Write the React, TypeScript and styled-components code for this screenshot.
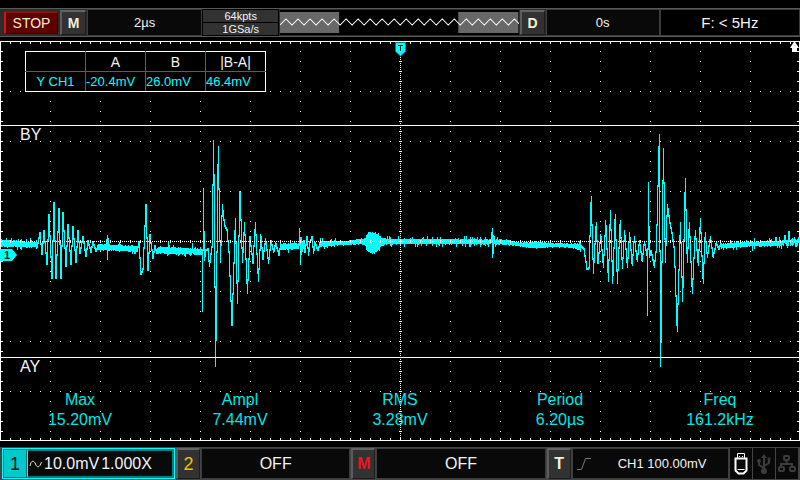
import React from 'react';
import styled, { createGlobalStyle } from 'styled-components';

const GlobalStyle = createGlobalStyle`
  * { box-sizing: border-box; }
  body { margin: 0; background: #000; }
  button { font-family: inherit; padding: 0; margin: 0; cursor: pointer; }
`;

const CYAN = '#00ffff';

const Screen = styled.main`
  display: flex;
  flex-direction: column;
  gap: 4px;
  padding-top: 8px;
  background: #000;
  color: #f4f4f4;
  font-family: "Liberation Sans", Arial, sans-serif;
  font-size: 13px;
  line-height: 16px;
`;

const TopBar = styled.header`
  display: grid;
  grid-template-columns: 60px 27px 115fr 77fr 240fr 26px 114fr 140fr;
  height: 29px;
  border-top: 1px solid #5a5a5a;
  border-bottom: 1px solid #5a5a5a;
  background: #2c2c2c;
`;

const StopButton = styled.button`
  margin: 2px 2px 2px 4px;
  border: 1px solid #3c0000;
  border-top: 2px solid #901010;
  border-left: 2px solid #d01414;
  background: #5e0000;
  color: #f6efd4;
  font-size: 14px;
  line-height: 16px;
`;

const KeyButton = styled.button<{ $color?: string; $size?: number; $bold?: boolean }>`
  border: 1px solid #1c1c1c;
  border-top: 2px solid #646464;
  border-left: 2px solid #5c5c5c;
  background: #323232;
  color: ${(p) => p.$color ?? '#f4f0d8'};
  font-size: ${(p) => p.$size ?? 14}px;
  font-weight: ${(p) => (p.$bold === false ? 400 : 700)};
  line-height: 18px;
`;

const TopKey = styled(KeyButton)`
  margin: 1px 1px 1px 0;
`;

const Panel = styled.div<{ $size?: number; $bg?: string }>`
  display: flex;
  align-items: center;
  justify-content: center;
  min-width: 0;
  border: 1px solid #3c3c3c;
  background: ${(p) => p.$bg ?? '#090909'};
  font-size: ${(p) => p.$size ?? 13}px;
  white-space: nowrap;
`;

const StatusPanel = styled(Panel)`
  border: 0;
`;

const SampleStack = styled.div`
  display: grid;
  grid-template-rows: 1fr 1fr;
  gap: 1px;
  padding: 1px;
  background: #000;
  font-size: 11px;
  line-height: 12px;
  text-align: center;
`;

const SampleCell = styled.div`
  background: #323232;
`;

const MemoryView = styled.div`
  border: 1px solid #2c2c2c;
  background: #000;
  svg { display: block; width: 100%; height: 25px; }
`;

const Plot = styled.section`
  position: relative;
`;

const PlotSvg = styled.svg`
  display: block;
  width: 100%;
  height: auto;
`;

const CursorTable = styled.table`
  position: absolute;
  top: 10px;
  left: 25px;
  border-collapse: collapse;
  table-layout: fixed;
  width: 241px;
  background: #000;
  border: 1px solid #fff;
  th, td {
    height: 20px;
    padding: 0;
    border: 1px solid #5c5c5c;
    font-weight: 400;
    line-height: 18px;
    white-space: nowrap;
  }
  thead th, thead td { border-top-color: #fff; font-size: 14px; }
  tbody th, tbody td { border-bottom-color: #fff; color: ${CYAN}; }
  tr > :first-child { border-left-color: #fff; }
  tr > :last-child { border-right-color: #fff; }
  th { text-align: center; }
`;

const CursorLabel = styled.span<{ $top: string }>`
  position: absolute;
  left: 20px;
  top: ${(p) => p.$top};
  font-size: 16px;
  line-height: 20px;
`;

const Measurements = styled.dl`
  position: absolute;
  left: 0;
  right: 0;
  bottom: 11px;
  display: grid;
  grid-template-columns: repeat(5, 1fr);
  margin: 0;
  color: #00e6e6;
  font-size: 16px;
  line-height: 20px;
  text-align: center;
  dd { margin: 0; }
`;

const BottomBar = styled.footer`
  display: grid;
  grid-template-columns: 173px 24px 149fr 24px 169fr 24px 157fr 22px 22px 22px;
  gap: 1px;
  height: 33px;
  margin-top: 2px;
  padding: 1px 2px;
  background: #444;
`;

const ChannelOne = styled.div`
  display: grid;
  grid-template-columns: 24px 1fr;
  border: 1px solid ${CYAN};
  background: #006c6c;
`;

const ChannelKey = styled.button`
  margin: 1px;
  border: 0;
  background: #00c8cc;
  color: #001414;
  font-size: 18px;
  line-height: 20px;
`;

const ChannelInfo = styled.div`
  display: flex;
  align-items: center;
  gap: 2px;
  padding-left: 1px;
  background: #0a0a0a;
  border: 2px solid #007c7c;
  border-left: 1px solid ${CYAN};
  font-size: 16px;
  white-space: nowrap;
`;

const TriggerInfo = styled(Panel)`
  justify-content: flex-start;
  gap: 27px;
  padding-left: 4px;
`;

/* Vertices of the burst sections, as [x, y] extremes of the oscillation. */
type Point = [number, number];
const bursts: Point[][] = [
  [[38, 243], [40, 233], [42, 254], [44, 231], [47, 264], [49, 215], [52, 278], [54, 203], [56, 278], [59, 209], [61, 278], [63, 213], [66, 266], [68, 225], [71, 264], [73, 227], [76, 262], [78, 231], [80, 253], [83, 237], [86, 256], [88, 241], [91, 252], [93, 242], [96, 251], [98, 246]],
  [[138, 247], [139, 242], [141, 274], [143, 269], [146, 205], [148, 270], [150, 235], [153, 258], [155, 246], [157, 253], [158, 249]],
  [[202, 250], [202.6, 311], [203.4, 189], [204.4, 260], [206, 250], [208, 249], [209.4, 266], [212, 247], [213.7, 141], [215.7, 366], [218.2, 147], [220.4, 262], [222.4, 205], [224.5, 225], [227, 230], [229, 252], [232, 325], [235.4, 219], [237.5, 303], [240, 192], [242.5, 262], [244.5, 223], [247.4, 293], [250, 237], [253, 263], [255.4, 223], [258.4, 281], [260.8, 235], [263, 259], [265.6, 239], [268.6, 263], [271, 241], [273.7, 252], [275.7, 243], [279, 255], [281, 242]],
  [[299, 245], [299.8, 229], [300.6, 264], [301.6, 238], [302.6, 251], [304, 241], [305, 252], [307, 237], [308.6, 255], [310, 242], [312, 237], [313.6, 253], [315, 243], [318, 250], [320, 243]],
  [[491, 242], [492.4, 229], [492.8, 257], [493.8, 236], [495, 243]],
  [[581, 246], [584, 249], [587, 269], [589, 268], [591.2, 197], [593.4, 273], [596.2, 223], [598, 263], [600.8, 235], [603.4, 267], [605.8, 221], [608.4, 281], [610.4, 211], [612.7, 283], [615.2, 215], [617.4, 283], [620.2, 221], [622.4, 268], [624.6, 231], [627.4, 267], [629.6, 233], [632.2, 265], [634.4, 237], [637.2, 261], [639.4, 241], [642.2, 261], [644.4, 242], [647.1, 256], [647.6, 315], [648.4, 183], [649.4, 257], [651, 251], [652.4, 257], [654.4, 267], [656.4, 248], [659.3, 135], [660.7, 366], [663.4, 149], [665.4, 262], [667.4, 205], [670, 223], [671.7, 231], [674.4, 250], [677.2, 331], [680.4, 223], [682.7, 301], [685.3, 179], [687.2, 262], [689.4, 223], [692.3, 293], [695.3, 231], [698.3, 265], [700.4, 219], [703.2, 283], [705.2, 233], [707.4, 257], [710.4, 237], [713.2, 257], [716.2, 243], [719, 249], [721, 243]],
];

/* Noise band between bursts: [x, centre, half height]. */
const band: [number, number, number][] = [
  [0, 243, 3], [20, 244, 2.5], [38, 245, 2], [98, 247, 2.5], [138, 249, 2.5], [158, 250, 3], [202, 252, 2.5],
  [281, 247, 2.5], [299, 246, 2.5], [320, 244, 2.5], [345, 243, 1.5], [362, 241.5, 2.5], [365, 242, 4], [367, 242, 8], [370, 243, 9],
  [375, 243, 9], [378, 242, 7], [381, 242, 4], [386, 241.5, 2], [440, 241.5, 2], [480, 242, 2], [505, 242, 2], [520, 244.5, 1.5],
  [530, 245, 2.5], [542, 245, 2.5], [550, 245, 1.5], [570, 245.5, 1.5], [581, 247, 3], [721, 246, 2], [743, 244.5, 2], [775, 243.5, 2], [800, 242, 3],
];

/* Short excursions on top of the noise: column -> [top, bottom]. */
const ticks: Record<number, Point> = {
  26: [239, 248], 36: [240, 249], 106: [239, 250], 107: [235, 260], 108: [238, 251], 120: [244, 251], 168: [241, 255], 169: [245, 254],
  192: [243, 253], 331: [239, 247], 390: [237, 246], 412: [237, 244], 432: [237, 246], 440: [237, 244], 472: [237, 244],
  480: [237, 247], 485: [237, 246], 497: [237, 244], 535: [241, 248], 536: [241, 249], 580: [241, 252],
  752: [242, 251], 775: [237, 246], 776: [237, 246], 779: [237, 248], 784: [235, 243], 785: [235, 244], 787: [240, 248], 788: [231, 246],
  789: [231, 242], 794: [237, 243], 796: [240, 247], 798: [237, 243], 799: [235, 242],
};

const noise = (n: number) => {
  const v = Math.sin(n * 12.9898) * 43758.5453;
  return v - Math.floor(v);
};

function valueAt(points: number[][], x: number, k: number) {
  for (let i = 1; i < points.length; i += 1) {
    const a = points[i - 1];
    const b = points[i];
    if (x <= b[0]) return a[k] + ((b[k] - a[k]) * (x - a[0])) / (b[0] - a[0]);
  }
  return points[points.length - 1][k];
}

function column(x: number): Point {
  if (ticks[x]) return ticks[x];
  const burst = bursts.find((b) => x >= b[0][0] && x < b[b.length - 1][0]);
  if (burst) {
    const inside = burst.filter((p) => p[0] >= x && p[0] <= x + 1).map((p) => p[1]);
    const ys = [valueAt(burst, x, 1), valueAt(burst, x + 1, 1), ...inside];
    return [Math.min(...ys) - 1, Math.max(...ys) + 1];
  }
  const c = valueAt(band, x, 1);
  const h = valueAt(band, x, 2);
  const quiet = (x > 335 && x < 362) || (x > 500 && x < 575);
  const extra = (key: number) => {
    if (h > 6) return 2;
    return noise(key) > 0.8 && !quiet ? 4 : 1;
  };
  return [c - h - noise(x) * extra(x * 5), c + h + noise(x + 900) * extra(x * 7 + 3)];
}

const tracePath = Array.from({ length: 800 }, (_, x) => {
  const [top, bottom] = column(x).map(Math.round);
  return `M${x} ${top}h1V${bottom}h-1z`;
}).join('');

const rect = (x: number, y: number, w = 1, h = 1) => `M${x} ${y}h${w}v${h}h${-w}z`;

function graticule() {
  let d = rect(0, 41, 800, 1) + rect(0, 440, 800, 1) + rect(0, 41, 1, 400) + rect(799, 41, 1, 400);
  for (let x = 10; x < 800; x += 10) {
    d += rect(x, 42, 1, 2) + rect(x, 438, 1, 2) + rect(x, 240, 1, 3);
    for (let y = 91; y < 440; y += 50) if (y !== 241) d += rect(x, y);
  }
  for (let y = 51; y < 440; y += 10) {
    d += rect(1, y, 2, 1) + rect(797, y, 2, 1) + rect(399, y, 3, 1);
    for (let x = 50; x < 800; x += 50) d += rect(x, y);
  }
  for (let x = 2; x < 800; x += 2) d += rect(x, 241);
  for (let y = 43; y < 440; y += 2) d += rect(400, y);
  return d;
}

const gridPath = graticule();

const zigzag = Array.from({ length: 41 }, (_, i) => `${i * 6},${i % 2 ? 9 : 15}`).join(' ');

const measurements = [
  ['Max', '15.20mV'],
  ['Ampl', '7.44mV'],
  ['RMS', '3.28mV'],
  ['Period', '6.20µs'],
  ['Freq', '161.2kHz'],
];

function Waveform() {
  return (
    <PlotSvg viewBox="0 41 800 400" role="img" aria-label="Channel 1 waveform">
      <g shapeRendering="crispEdges">
        <path d={tracePath} fill={CYAN} />
        <path d={gridPath} fill="#fff" />
        <path d={rect(0, 125, 800, 1) + rect(0, 357, 800, 1)} fill="#fff" />
      </g>
      <path d="M395.5 42.5h10v9l-5 4.5l-5-4.5z" fill={CYAN} stroke="#007c80" />
      <path d="M398 45h5v1h-2v5h-1v-5h-2z" fill="#002020" shapeRendering="crispEdges" />
      <path d="M794.5 41l4.5 7h-2v4h-5v-4h-2z" fill="#fff" />
      <path d="M0 249h12l5 6-5 6H0z" fill={CYAN} />
      <text x="4" y="259" fontSize="11" fontWeight="700" fill="#002020">1</text>
    </PlotSvg>
  );
}

export default function App() {
  return (
    <>
      <GlobalStyle />
      <Screen>
        <TopBar>
          <StopButton type="button">STOP</StopButton>
          <TopKey type="button">M</TopKey>
          <Panel>2µs</Panel>
          <SampleStack>
            <SampleCell>64kpts</SampleCell>
            <SampleCell>1GSa/s</SampleCell>
          </SampleStack>
          <MemoryView>
            <svg viewBox="0 0 238 25" preserveAspectRatio="none" aria-hidden="true">
              <path d="M0 2h59v21H0zM178 2h60v21h-60z" fill="#686868" />
              <polyline points={zigzag} fill="none" stroke="#fff" />
            </svg>
          </MemoryView>
          <TopKey type="button">D</TopKey>
          <Panel>0s</Panel>
          <Panel $size={15} $bg="#000">F: &lt; 5Hz</Panel>
        </TopBar>

        <Plot>
          <Waveform />
          <CursorTable>
            <thead>
              <tr>
                <td />
                <th scope="col">A</th>
                <th scope="col">B</th>
                <th scope="col">|B-A|</th>
              </tr>
            </thead>
            <tbody>
              <tr>
                <th scope="row">Y CH1</th>
                <td>-20.4mV</td>
                <td>26.0mV</td>
                <td>46.4mV</td>
              </tr>
            </tbody>
          </CursorTable>
          <CursorLabel $top="21%">BY</CursorLabel>
          <CursorLabel $top="79%">AY</CursorLabel>
          <Measurements>
            {measurements.map(([name, value]) => (
              <div key={name}>
                <dt>{name}</dt>
                <dd>{value}</dd>
              </div>
            ))}
          </Measurements>
        </Plot>

        <BottomBar>
          <ChannelOne>
            <ChannelKey type="button">1</ChannelKey>
            <ChannelInfo>
              <svg width="13" height="8" viewBox="0 0 13 8" aria-hidden="true">
                <path d="M1 6C2 0 5 0 6.500 4s4 4 6-2" fill="none" stroke="#e8e4b8" />
              </svg>
              <span>10.0mV</span>
              <span>1.000X</span>
            </ChannelInfo>
          </ChannelOne>
          <KeyButton type="button" $color="#f0c010" $size={18} $bold={false}>2</KeyButton>
          <Panel $size={16}>OFF</Panel>
          <KeyButton type="button" $color="#e81820" $size={16}>M</KeyButton>
          <Panel $size={16}>OFF</Panel>
          <KeyButton type="button" $size={16}>T</KeyButton>
          <TriggerInfo>
            <svg width="14" height="12" viewBox="0 0 14 12" aria-hidden="true">
              <path d="M0 11.500h4.500l4-11H14" fill="none" stroke="#777" />
            </svg>
            <span>CH1 100.00mV</span>
          </TriggerInfo>
          <StatusPanel>
            <svg width="14" height="22" viewBox="0 0 14 22" fill="none" stroke="#fff" aria-label="USB drive">
              <path d="M3.500 5.500v-5h7v5M5 3.500h1M8 3.500h1" />
              <path d="M1.500 5.500h11v12l-3 3h-5l-3-3z" strokeWidth="2" />
              <path d="M3.500 16.500h7" />
            </svg>
          </StatusPanel>
          <StatusPanel>
            <svg width="14" height="20" viewBox="0 0 14 20" fill="none" stroke="#3c3c3c" strokeWidth="2" aria-label="USB">
              <path d="M7 3v14M7 14L2 11V7M7 12l5-3V5" />
              <path d="M7 0l3 4H4z" fill="#3c3c3c" stroke="none" />
              <circle cx="7" cy="17" r="2" fill="#3c3c3c" />
              <circle cx="2" cy="7" r="1" />
              <path d="M11 4h2v2h-2z" strokeWidth="1" />
            </svg>
          </StatusPanel>
          <StatusPanel>
            <svg width="18" height="18" viewBox="0 0 18 18" fill="none" stroke="#3c3c3c" strokeWidth="2" aria-label="Network">
              <rect x="6" y="1" width="5" height="4" rx="1" />
              <rect x="1" y="12" width="5" height="4" rx="1" />
              <rect x="12" y="12" width="5" height="4" rx="1" />
              <path d="M8.500 5v4M3 12V9h11v3" />
            </svg>
          </StatusPanel>
        </BottomBar>
      </Screen>
    </>
  );
}
